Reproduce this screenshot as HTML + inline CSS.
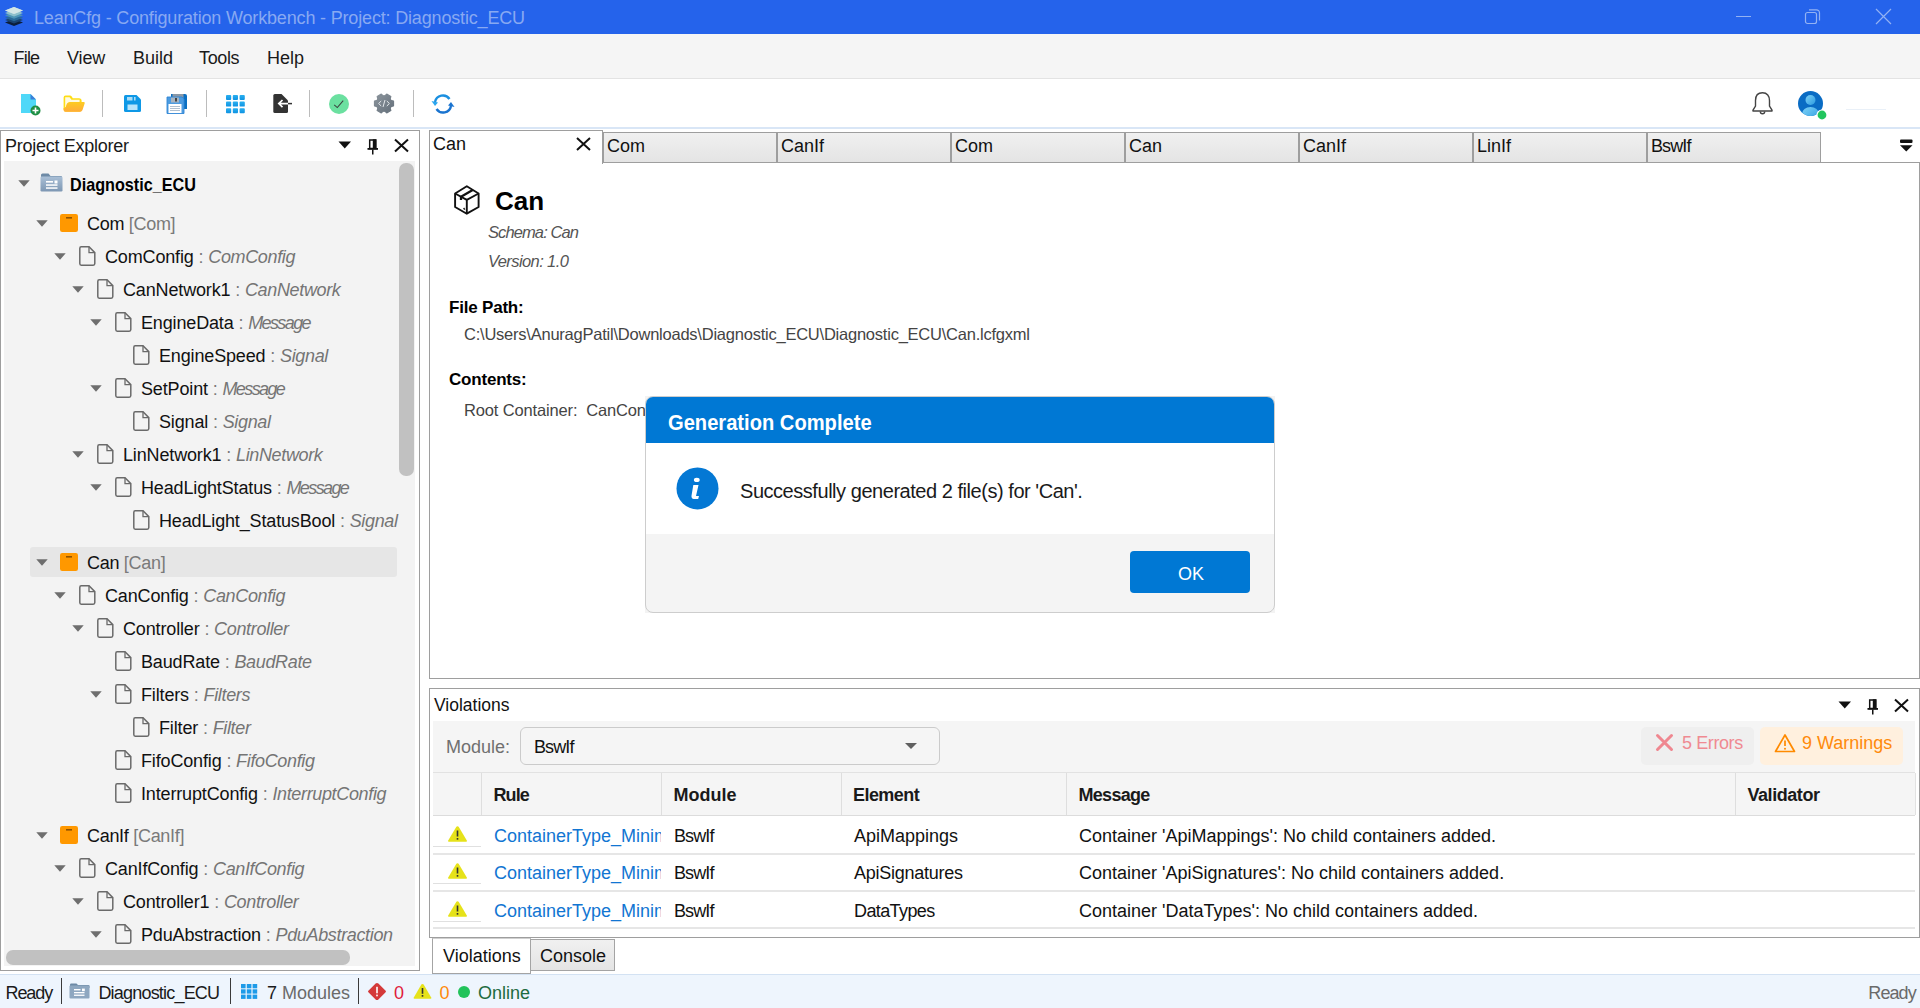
<!DOCTYPE html>
<html><head><meta charset="utf-8"><style>
html,body{margin:0;padding:0;width:1920px;height:1008px;overflow:hidden;background:#fff;font-family:"Liberation Sans",sans-serif;}
.t{position:absolute;white-space:nowrap;}
.r{position:absolute;}
svg.r{overflow:visible;}
</style></head><body>
<div class="r" style="left:0px;top:0px;width:1920px;height:34px;background:#2563eb"></div>
<svg class="r" style="left:0px;top:0px" width="30" height="34" viewBox="0 0 30 34"><path d="M14 19.0 L23 22.5 L14 26.0 L5 22.5 Z" fill="#0c1e3a"/><path d="M14 16.6 L23 20.1 L14 23.6 L5 20.1 Z" fill="#1a4470"/><path d="M14 14.2 L23 17.7 L14 21.2 L5 17.7 Z" fill="#2a6a98"/><path d="M14 11.8 L23 15.3 L14 18.8 L5 15.3 Z" fill="#4d95b5"/><path d="M14 9.4 L23 12.9 L14 16.4 L5 12.9 Z" fill="#8cc0cc"/><path d="M14 7.0 L23 10.5 L14 14.0 L5 10.5 Z" fill="#b5d5da"/><path d="M14 7.0 L23 10.5 L14 14.0 L5 10.5 Z" fill="#d3e6e6"/></svg>
<div class="t " style="left:34px;top:7.06px;font-size:18px;line-height:23px;color:#88a9f2;font-weight:400;font-style:normal;letter-spacing:-0.17px;">LeanCfg - Configuration Workbench - Project: Diagnostic_ECU</div>
<svg class="r" style="left:1736px;top:16px" width="16" height="2" viewBox="0 0 16 2"><rect x="0" y="0" width="15" height="1" fill="#93b2f3"/></svg>
<svg class="r" style="left:1804px;top:8px" width="18" height="18" viewBox="0 0 18 18"><rect x="1.5" y="4.5" width="11" height="11" rx="2" fill="none" stroke="#93b2f3" stroke-width="1.2"/><path d="M5 1.8 H12.5 a3 3 0 0 1 3 3 V12.5" fill="none" stroke="#93b2f3" stroke-width="1.2"/></svg>
<svg class="r" style="left:1875px;top:8px" width="17" height="17" viewBox="0 0 17 17"><path d="M1 1 L16 16 M16 1 L1 16" stroke="#93b2f3" stroke-width="1.2"/></svg>
<div class="r" style="left:0px;top:34px;width:1920px;height:45px;background:#f5f5f5"></div>
<div class="r" style="left:0px;top:78px;width:1920px;height:1px;background:#e3e3e3"></div>
<div class="t " style="left:13.5px;top:47.46px;font-size:18px;line-height:23px;color:#1a1a1a;font-weight:400;font-style:normal;letter-spacing:-0.8px;">File</div>
<div class="t " style="left:67px;top:47.46px;font-size:18px;line-height:23px;color:#1a1a1a;font-weight:400;font-style:normal;letter-spacing:-0.15px;">View</div>
<div class="t " style="left:133px;top:47.46px;font-size:18px;line-height:23px;color:#1a1a1a;font-weight:400;font-style:normal;letter-spacing:0px;">Build</div>
<div class="t " style="left:199px;top:47.46px;font-size:18px;line-height:23px;color:#1a1a1a;font-weight:400;font-style:normal;letter-spacing:-0.35px;">Tools</div>
<div class="t " style="left:267px;top:47.46px;font-size:18px;line-height:23px;color:#1a1a1a;font-weight:400;font-style:normal;letter-spacing:0px;">Help</div>
<div class="r" style="left:0px;top:79px;width:1920px;height:49px;background:#fff"></div>
<div class="r" style="left:0px;top:127px;width:1920px;height:2px;background:#d9e6f6"></div>
<div class="r" style="left:102px;top:90px;width:1px;height:27px;background:#bcbcbc"></div>
<div class="r" style="left:206px;top:90px;width:1px;height:27px;background:#bcbcbc"></div>
<div class="r" style="left:309px;top:90px;width:1px;height:27px;background:#bcbcbc"></div>
<div class="r" style="left:413px;top:90px;width:1px;height:27px;background:#bcbcbc"></div>
<svg class="r" style="left:20px;top:93px" width="20" height="22" viewBox="0 0 20 22">
<path d="M1 1 H10.5 L16 6.5 V20 H1 Z" fill="#4fd8f8"/>
<path d="M10.5 1 L16 6.5 H10.5 Z" fill="#3b7fd8"/>
<circle cx="15.5" cy="17.5" r="5" fill="#1e8f45"/>
<path d="M15.5 14.5 V20.5 M12.5 17.5 H18.5" stroke="#fff" stroke-width="1.6"/>
</svg>
<svg class="r" style="left:63px;top:95px" width="23" height="18" viewBox="0 0 23 18">
<defs><linearGradient id="fg" x1="0" y1="0" x2="0" y2="1"><stop offset="0" stop-color="#fdcc20"/><stop offset="1" stop-color="#ffab3a"/></linearGradient></defs>
<path d="M0.6 2.6 Q0.6 0.6 2.6 0.6 H7 Q8 0.6 8.7 1.6 L9.8 3.2 H16 Q18.6 3.2 18.6 5.8 V14.8 Q18.6 16.8 16.6 16.8 H2.6 Q0.6 16.8 0.6 14.8 Z" fill="#fedd16"/>
<path d="M2.2 2.3 H6.6 L8.4 4.8 H16.6 V12 H2.2 Z" fill="#fffbe0"/>
<path d="M2.6 13 Q3.4 6.9 6.6 6.9 H20.6 Q22.1 6.9 21.7 8.3 L19.5 15 Q18.9 16.8 17 16.8 H2.6 Q0.6 16.8 0.6 14.8 V13 Z" fill="url(#fg)"/>
</svg>
<svg class="r" style="left:123px;top:94px" width="19" height="19" viewBox="0 0 19 19">
<path d="M2.5 1 H13.5 L18 5.5 V16.5 Q18 18 16.5 18 H2.5 Q1 18 1 16.5 V2.5 Q1 1 2.5 1 Z" fill="#0e98e6"/>
<rect x="4" y="3" width="5.5" height="3.5" fill="#a9dcf7"/>
<rect x="11" y="3" width="1.6" height="3.5" fill="#a9dcf7"/>
<rect x="4.5" y="10.5" width="10" height="5.5" fill="#b7e4fb"/>
</svg>
<svg class="r" style="left:166px;top:93px" width="22" height="22" viewBox="0 0 22 22">
<path d="M5 1 H19 Q21 1 21 3 V16 H5 Z" fill="#0a6fc2"/>
<rect x="6.5" y="1" width="11" height="5" fill="#8a98a6"/>
<path d="M1 4 H16 L18 6 V20.5 H1 Z" fill="#4c9be0"/>
<rect x="5" y="4" width="8" height="5.5" fill="#a8b4c0"/>
<rect x="9" y="5" width="2" height="3.5" fill="#444"/>
<rect x="2.5" y="11" width="13" height="9.5" fill="#fff"/>
<path d="M4 13.5 H14 M4 15.5 H14 M4 17.5 H14" stroke="#9cb0c4" stroke-width="0.8"/>
<path d="M1 4 H16 L18 6 V20.5 H1 Z" fill="none" stroke="#2f86d6" stroke-width="0.9"/>
</svg>
<svg class="r" style="left:226px;top:94.5px" width="19" height="19" viewBox="0 0 19 19"><defs><linearGradient id="gr" x1="0" y1="0" x2="0" y2="1"><stop offset="0" stop-color="#2ab0f0"/><stop offset="1" stop-color="#0e92e2"/></linearGradient></defs><rect x="0.0" y="0.0" width="5.2" height="5" rx="0.9" fill="url(#gr)"/><rect x="6.8" y="0.0" width="5.2" height="5" rx="0.9" fill="url(#gr)"/><rect x="13.6" y="0.0" width="5.2" height="5" rx="0.9" fill="url(#gr)"/><rect x="0.0" y="6.6" width="5.2" height="5" rx="0.9" fill="url(#gr)"/><rect x="6.8" y="6.6" width="5.2" height="5" rx="0.9" fill="url(#gr)"/><rect x="13.6" y="6.6" width="5.2" height="5" rx="0.9" fill="url(#gr)"/><rect x="0.0" y="13.2" width="5.2" height="5" rx="0.9" fill="url(#gr)"/><rect x="6.8" y="13.2" width="5.2" height="5" rx="0.9" fill="url(#gr)"/><rect x="13.6" y="13.2" width="5.2" height="5" rx="0.9" fill="url(#gr)"/></svg>
<svg class="r" style="left:273px;top:94px" width="20" height="20" viewBox="0 0 20 20">
<path d="M1.8 0 H8.5 L15 6.5 V17.5 Q15 19 13.5 19 H1.8 Q0.3 19 0.3 17.5 V1.5 Q0.3 0 1.8 0 Z" fill="#333"/>
<path d="M15 9.6 H6 M9.5 6 L5.8 9.6 L9.5 13.2" fill="none" stroke="#fff" stroke-width="1.7"/>
<path d="M15 9.6 H19" stroke="#333" stroke-width="1.5"/>
</svg>
<svg class="r" style="left:329px;top:94px" width="20" height="20" viewBox="0 0 20 20">
<circle cx="10" cy="10" r="10" fill="#6be0a0"/>
<path d="M5.2 10.8 L8.3 13.6 L14.2 6.6" fill="none" stroke="#3c4440" stroke-width="1.05"/>
</svg>
<svg class="r" style="left:374px;top:94px" width="20" height="19" viewBox="0 0 20 19">
<defs><linearGradient id="gg" x1="0" y1="0" x2="1" y2="1"><stop offset="0" stop-color="#8a939b"/><stop offset="1" stop-color="#66717c"/></linearGradient></defs>
<path d="M16.94 6.41 L19.51 7.13 L19.51 11.87 L16.94 12.59 L16.15 13.97 L16.81 16.55 L12.70 18.92 L10.79 17.06 L9.21 17.06 L7.30 18.92 L3.19 16.55 L3.85 13.97 L3.06 12.59 L0.49 11.87 L0.49 7.13 L3.06 6.41 L3.85 5.03 L3.19 2.45 L7.30 0.08 L9.21 1.94 L10.79 1.94 L12.70 0.08 L16.81 2.45 L16.15 5.03 Z" fill="url(#gg)" stroke="url(#gg)" stroke-width="1.2" stroke-linejoin="round"/>
<circle cx="10" cy="9.5" r="8" fill="url(#gg)"/>
<path d="M7.2 7 L4.6 9.5 L7.2 12 M12.8 7 L15.4 9.5 L12.8 12 M11 6 L9 13" fill="none" stroke="#e4e8ec" stroke-width="1"/>
</svg>
<svg class="r" style="left:431px;top:93px" width="24" height="22" viewBox="0 0 24 22">
<path d="M4 9 A8 8 0 0 1 18.5 6" fill="none" stroke="#1a8fe0" stroke-width="2.4"/>
<path d="M20 13 A8 8 0 0 1 5.5 16" fill="none" stroke="#1a74d0" stroke-width="2.4"/>
<path d="M0.5 8 L7 9.5 L4 13 Z" fill="#2aa6ef"/>
<path d="M23.5 14 L17 12.5 L20 9 Z" fill="#1a74d0"/>
</svg>
<svg class="r" style="left:1751px;top:91px" width="23" height="25" viewBox="0 0 23 25">
<path d="M11.5 1.8 C6.8 1.8 4.5 5.2 4.5 9.5 V15 L2 19.2 Q1.6 20 2.5 20 H20.5 Q21.4 20 21 19.2 L18.5 15 V9.5 C18.5 5.2 16.2 1.8 11.5 1.8 Z" fill="none" stroke="#444" stroke-width="1.4"/>
<path d="M9.3 20.5 Q9.3 22.8 11.5 22.8 Q13.7 22.8 13.7 20.5" fill="none" stroke="#444" stroke-width="1.4"/>
</svg>
<svg class="r" style="left:1797px;top:90px" width="31" height="31" viewBox="0 0 31 31">
<defs><linearGradient id="av" x1="0" y1="0" x2="1" y2="1"><stop offset="0" stop-color="#7fd2f7"/><stop offset="1" stop-color="#2b9be0"/></linearGradient>
<clipPath id="avc"><circle cx="13.5" cy="13.5" r="12.5"/></clipPath></defs>
<circle cx="13.5" cy="13.5" r="12.5" fill="#0a6cc4"/>
<g clip-path="url(#avc)"><circle cx="13.5" cy="10" r="5" fill="url(#av)"/><ellipse cx="13.5" cy="24" rx="8.5" ry="7" fill="url(#av)"/></g>
<circle cx="25" cy="25" r="5.5" fill="#fff"/>
<circle cx="25" cy="25" r="4.4" fill="#22c55e"/>
</svg>
<div class="r" style="left:0px;top:129px;width:1920px;height:845px;background:#fff"></div>
<div class="r" style="left:1846px;top:109px;width:40px;height:1px;background:#e9f0f8"></div>
<div class="r" style="left:0px;top:130px;width:420px;height:841px;box-sizing:border-box;border:1px solid #9e9e9e;background:#fff"></div>
<div class="t " style="left:5px;top:135.36px;font-size:18px;line-height:23px;color:#1a1a1a;font-weight:400;font-style:normal;letter-spacing:-0.27px;">Project Explorer</div>
<svg class="r" style="left:338px;top:141px" width="14" height="8" viewBox="0 0 14 8"><path d="M0.5 0.5 H13 L6.75 7.5 Z" fill="#111"/></svg>
<svg class="r" style="left:366px;top:138px" width="12" height="17" viewBox="0 0 12 17"><path d="M3.7 2 H9.7 V10.5 H3.7 Z" fill="none" stroke="#111" stroke-width="1.5"/><rect x="6.8" y="1.3" width="3.6" height="9.5" fill="#111"/><rect x="1.5" y="10" width="10.5" height="1.8" fill="#111"/><rect x="6" y="11.5" width="1.5" height="5" fill="#111"/></svg>
<svg class="r" style="left:394px;top:139px" width="15" height="13" viewBox="0 0 15 13"><path d="M1 0.5 L14 12.5 M14 0.5 L1 12.5" stroke="#111" stroke-width="2"/></svg>
<div class="r" style="left:4px;top:161px;width:411px;height:805px;background:#f3f3f3"></div>
<div class="r" style="left:399px;top:163px;width:15px;height:313px;background:#c1c1c1;border-radius:7px"></div>
<div class="r" style="left:6px;top:950px;width:344px;height:15px;background:#c1c1c1;border-radius:7px"></div>
<div class="r" style="left:30px;top:547px;width:367px;height:30px;background:#e6e6e6;border-radius:3px"></div>
<svg class="r" style="left:18px;top:179.8px" width="12" height="7" viewBox="0 0 12 7"><path d="M0.3 0.3 H11.7 L6 6.7 Z" fill="#6e6e6e"/></svg>
<svg class="r" style="left:40px;top:173.3px" width="23" height="19" viewBox="0 0 23 19"><defs><linearGradient id="pj" x1="0" y1="0" x2="0" y2="1"><stop offset="0" stop-color="#a9bfd6"/><stop offset="1" stop-color="#7d97b3"/></linearGradient></defs>
<path d="M1 2 Q1 0.5 2.5 0.5 H8.5 L10.5 3 H21 Q22 3 22 4 V6 H1 Z" fill="#6d8aa6"/>
<rect x="0.5" y="3.5" width="22" height="15" rx="1.2" fill="url(#pj)"/>
<rect x="6" y="8" width="7" height="1.6" fill="#fff"/><rect x="14.5" y="7.5" width="3" height="3" fill="#fff"/>
<rect x="6" y="11.3" width="11.5" height="1.5" fill="#fff"/><rect x="6" y="14.3" width="11.5" height="1.5" fill="#fff"/></svg>
<div class="t " style="left:70px;top:172.89px;font-size:18.5px;line-height:24px;color:#000;font-weight:700;font-style:normal;transform:scaleX(0.875);transform-origin:0 0;">Diagnostic_ECU</div>
<svg class="r" style="left:36px;top:219.5px" width="12" height="7" viewBox="0 0 12 7"><path d="M0.3 0.3 H11.7 L6 6.7 Z" fill="#6e6e6e"/></svg>
<svg class="r" style="left:60px;top:214px" width="18" height="18" viewBox="0 0 18 18"><rect x="0" y="0" width="18" height="18" rx="2.2" fill="#ff9800"/><rect x="6" y="3" width="6" height="1.6" fill="#6b3b00" opacity="0.75"/></svg>
<div class="t " style="left:87px;top:213.26px;font-size:18px;line-height:23px;color:#111;font-weight:400;font-style:normal;letter-spacing:-0.3px">Com <span style="color:#7a7a7a">[Com]</span></div>
<svg class="r" style="left:54px;top:252.5px" width="12" height="7" viewBox="0 0 12 7"><path d="M0.3 0.3 H11.7 L6 6.7 Z" fill="#6e6e6e"/></svg>
<svg class="r" style="left:79px;top:246px" width="17" height="20" viewBox="0 0 17 20"><path d="M2.2 0.8 H10 L15.8 6.6 V17.6 Q15.8 19.2 14.2 19.2 H2.2 Q0.8 19.2 0.8 17.6 V2.4 Q0.8 0.8 2.2 0.8 Z" fill="none" stroke="#6a6a6a" stroke-width="1.5"/><path d="M10 0.8 V6.6 H15.8" fill="none" stroke="#6a6a6a" stroke-width="1.3"/></svg>
<div class="t " style="left:105px;top:246.26px;font-size:18px;line-height:23px;color:#111;font-weight:400;font-style:normal;letter-spacing:-0.15px">ComConfig <span style="color:#7a7a7a">:</span> <span style="color:#757575;font-style:italic;letter-spacing:-0.35px">ComConfig</span></div>
<svg class="r" style="left:72px;top:285.5px" width="12" height="7" viewBox="0 0 12 7"><path d="M0.3 0.3 H11.7 L6 6.7 Z" fill="#6e6e6e"/></svg>
<svg class="r" style="left:97px;top:279px" width="17" height="20" viewBox="0 0 17 20"><path d="M2.2 0.8 H10 L15.8 6.6 V17.6 Q15.8 19.2 14.2 19.2 H2.2 Q0.8 19.2 0.8 17.6 V2.4 Q0.8 0.8 2.2 0.8 Z" fill="none" stroke="#6a6a6a" stroke-width="1.5"/><path d="M10 0.8 V6.6 H15.8" fill="none" stroke="#6a6a6a" stroke-width="1.3"/></svg>
<div class="t " style="left:123px;top:279.26px;font-size:18px;line-height:23px;color:#111;font-weight:400;font-style:normal;letter-spacing:-0.15px">CanNetwork1 <span style="color:#7a7a7a">:</span> <span style="color:#757575;font-style:italic;letter-spacing:-0.35px">CanNetwork</span></div>
<svg class="r" style="left:90px;top:318.5px" width="12" height="7" viewBox="0 0 12 7"><path d="M0.3 0.3 H11.7 L6 6.7 Z" fill="#6e6e6e"/></svg>
<svg class="r" style="left:115px;top:312px" width="17" height="20" viewBox="0 0 17 20"><path d="M2.2 0.8 H10 L15.8 6.6 V17.6 Q15.8 19.2 14.2 19.2 H2.2 Q0.8 19.2 0.8 17.6 V2.4 Q0.8 0.8 2.2 0.8 Z" fill="none" stroke="#6a6a6a" stroke-width="1.5"/><path d="M10 0.8 V6.6 H15.8" fill="none" stroke="#6a6a6a" stroke-width="1.3"/></svg>
<div class="t " style="left:141px;top:312.26px;font-size:18px;line-height:23px;color:#111;font-weight:400;font-style:normal;letter-spacing:-0.15px">EngineData <span style="color:#7a7a7a">:</span> <span style="color:#757575;font-style:italic;letter-spacing:-1.6px">Message</span></div>
<svg class="r" style="left:133px;top:345px" width="17" height="20" viewBox="0 0 17 20"><path d="M2.2 0.8 H10 L15.8 6.6 V17.6 Q15.8 19.2 14.2 19.2 H2.2 Q0.8 19.2 0.8 17.6 V2.4 Q0.8 0.8 2.2 0.8 Z" fill="none" stroke="#6a6a6a" stroke-width="1.5"/><path d="M10 0.8 V6.6 H15.8" fill="none" stroke="#6a6a6a" stroke-width="1.3"/></svg>
<div class="t " style="left:159px;top:345.26px;font-size:18px;line-height:23px;color:#111;font-weight:400;font-style:normal;letter-spacing:-0.15px">EngineSpeed <span style="color:#7a7a7a">:</span> <span style="color:#757575;font-style:italic;letter-spacing:-0.35px">Signal</span></div>
<svg class="r" style="left:90px;top:384.5px" width="12" height="7" viewBox="0 0 12 7"><path d="M0.3 0.3 H11.7 L6 6.7 Z" fill="#6e6e6e"/></svg>
<svg class="r" style="left:115px;top:378px" width="17" height="20" viewBox="0 0 17 20"><path d="M2.2 0.8 H10 L15.8 6.6 V17.6 Q15.8 19.2 14.2 19.2 H2.2 Q0.8 19.2 0.8 17.6 V2.4 Q0.8 0.8 2.2 0.8 Z" fill="none" stroke="#6a6a6a" stroke-width="1.5"/><path d="M10 0.8 V6.6 H15.8" fill="none" stroke="#6a6a6a" stroke-width="1.3"/></svg>
<div class="t " style="left:141px;top:378.26px;font-size:18px;line-height:23px;color:#111;font-weight:400;font-style:normal;letter-spacing:-0.15px">SetPoint <span style="color:#7a7a7a">:</span> <span style="color:#757575;font-style:italic;letter-spacing:-1.6px">Message</span></div>
<svg class="r" style="left:133px;top:411px" width="17" height="20" viewBox="0 0 17 20"><path d="M2.2 0.8 H10 L15.8 6.6 V17.6 Q15.8 19.2 14.2 19.2 H2.2 Q0.8 19.2 0.8 17.6 V2.4 Q0.8 0.8 2.2 0.8 Z" fill="none" stroke="#6a6a6a" stroke-width="1.5"/><path d="M10 0.8 V6.6 H15.8" fill="none" stroke="#6a6a6a" stroke-width="1.3"/></svg>
<div class="t " style="left:159px;top:411.26px;font-size:18px;line-height:23px;color:#111;font-weight:400;font-style:normal;letter-spacing:-0.15px">Signal <span style="color:#7a7a7a">:</span> <span style="color:#757575;font-style:italic;letter-spacing:-0.35px">Signal</span></div>
<svg class="r" style="left:72px;top:450.5px" width="12" height="7" viewBox="0 0 12 7"><path d="M0.3 0.3 H11.7 L6 6.7 Z" fill="#6e6e6e"/></svg>
<svg class="r" style="left:97px;top:444px" width="17" height="20" viewBox="0 0 17 20"><path d="M2.2 0.8 H10 L15.8 6.6 V17.6 Q15.8 19.2 14.2 19.2 H2.2 Q0.8 19.2 0.8 17.6 V2.4 Q0.8 0.8 2.2 0.8 Z" fill="none" stroke="#6a6a6a" stroke-width="1.5"/><path d="M10 0.8 V6.6 H15.8" fill="none" stroke="#6a6a6a" stroke-width="1.3"/></svg>
<div class="t " style="left:123px;top:444.26px;font-size:18px;line-height:23px;color:#111;font-weight:400;font-style:normal;letter-spacing:-0.15px">LinNetwork1 <span style="color:#7a7a7a">:</span> <span style="color:#757575;font-style:italic;letter-spacing:-0.35px">LinNetwork</span></div>
<svg class="r" style="left:90px;top:483.5px" width="12" height="7" viewBox="0 0 12 7"><path d="M0.3 0.3 H11.7 L6 6.7 Z" fill="#6e6e6e"/></svg>
<svg class="r" style="left:115px;top:477px" width="17" height="20" viewBox="0 0 17 20"><path d="M2.2 0.8 H10 L15.8 6.6 V17.6 Q15.8 19.2 14.2 19.2 H2.2 Q0.8 19.2 0.8 17.6 V2.4 Q0.8 0.8 2.2 0.8 Z" fill="none" stroke="#6a6a6a" stroke-width="1.5"/><path d="M10 0.8 V6.6 H15.8" fill="none" stroke="#6a6a6a" stroke-width="1.3"/></svg>
<div class="t " style="left:141px;top:477.26px;font-size:18px;line-height:23px;color:#111;font-weight:400;font-style:normal;letter-spacing:-0.15px">HeadLightStatus <span style="color:#7a7a7a">:</span> <span style="color:#757575;font-style:italic;letter-spacing:-1.6px">Message</span></div>
<svg class="r" style="left:133px;top:510px" width="17" height="20" viewBox="0 0 17 20"><path d="M2.2 0.8 H10 L15.8 6.6 V17.6 Q15.8 19.2 14.2 19.2 H2.2 Q0.8 19.2 0.8 17.6 V2.4 Q0.8 0.8 2.2 0.8 Z" fill="none" stroke="#6a6a6a" stroke-width="1.5"/><path d="M10 0.8 V6.6 H15.8" fill="none" stroke="#6a6a6a" stroke-width="1.3"/></svg>
<div class="t " style="left:159px;top:510.26px;font-size:18px;line-height:23px;color:#111;font-weight:400;font-style:normal;letter-spacing:-0.15px">HeadLight_StatusBool <span style="color:#7a7a7a">:</span> <span style="color:#757575;font-style:italic;letter-spacing:-0.35px">Signal</span></div>
<svg class="r" style="left:36px;top:558.5px" width="12" height="7" viewBox="0 0 12 7"><path d="M0.3 0.3 H11.7 L6 6.7 Z" fill="#6e6e6e"/></svg>
<svg class="r" style="left:60px;top:553px" width="18" height="18" viewBox="0 0 18 18"><rect x="0" y="0" width="18" height="18" rx="2.2" fill="#ff9800"/><rect x="6" y="3" width="6" height="1.6" fill="#6b3b00" opacity="0.75"/></svg>
<div class="t " style="left:87px;top:552.26px;font-size:18px;line-height:23px;color:#111;font-weight:400;font-style:normal;letter-spacing:-0.3px">Can <span style="color:#7a7a7a">[Can]</span></div>
<svg class="r" style="left:54px;top:591.5px" width="12" height="7" viewBox="0 0 12 7"><path d="M0.3 0.3 H11.7 L6 6.7 Z" fill="#6e6e6e"/></svg>
<svg class="r" style="left:79px;top:585px" width="17" height="20" viewBox="0 0 17 20"><path d="M2.2 0.8 H10 L15.8 6.6 V17.6 Q15.8 19.2 14.2 19.2 H2.2 Q0.8 19.2 0.8 17.6 V2.4 Q0.8 0.8 2.2 0.8 Z" fill="none" stroke="#6a6a6a" stroke-width="1.5"/><path d="M10 0.8 V6.6 H15.8" fill="none" stroke="#6a6a6a" stroke-width="1.3"/></svg>
<div class="t " style="left:105px;top:585.26px;font-size:18px;line-height:23px;color:#111;font-weight:400;font-style:normal;letter-spacing:-0.15px">CanConfig <span style="color:#7a7a7a">:</span> <span style="color:#757575;font-style:italic;letter-spacing:-0.35px">CanConfig</span></div>
<svg class="r" style="left:72px;top:624.5px" width="12" height="7" viewBox="0 0 12 7"><path d="M0.3 0.3 H11.7 L6 6.7 Z" fill="#6e6e6e"/></svg>
<svg class="r" style="left:97px;top:618px" width="17" height="20" viewBox="0 0 17 20"><path d="M2.2 0.8 H10 L15.8 6.6 V17.6 Q15.8 19.2 14.2 19.2 H2.2 Q0.8 19.2 0.8 17.6 V2.4 Q0.8 0.8 2.2 0.8 Z" fill="none" stroke="#6a6a6a" stroke-width="1.5"/><path d="M10 0.8 V6.6 H15.8" fill="none" stroke="#6a6a6a" stroke-width="1.3"/></svg>
<div class="t " style="left:123px;top:618.26px;font-size:18px;line-height:23px;color:#111;font-weight:400;font-style:normal;letter-spacing:-0.15px">Controller <span style="color:#7a7a7a">:</span> <span style="color:#757575;font-style:italic;letter-spacing:-0.35px">Controller</span></div>
<svg class="r" style="left:115px;top:651px" width="17" height="20" viewBox="0 0 17 20"><path d="M2.2 0.8 H10 L15.8 6.6 V17.6 Q15.8 19.2 14.2 19.2 H2.2 Q0.8 19.2 0.8 17.6 V2.4 Q0.8 0.8 2.2 0.8 Z" fill="none" stroke="#6a6a6a" stroke-width="1.5"/><path d="M10 0.8 V6.6 H15.8" fill="none" stroke="#6a6a6a" stroke-width="1.3"/></svg>
<div class="t " style="left:141px;top:651.26px;font-size:18px;line-height:23px;color:#111;font-weight:400;font-style:normal;letter-spacing:-0.15px">BaudRate <span style="color:#7a7a7a">:</span> <span style="color:#757575;font-style:italic;letter-spacing:-0.35px">BaudRate</span></div>
<svg class="r" style="left:90px;top:690.5px" width="12" height="7" viewBox="0 0 12 7"><path d="M0.3 0.3 H11.7 L6 6.7 Z" fill="#6e6e6e"/></svg>
<svg class="r" style="left:115px;top:684px" width="17" height="20" viewBox="0 0 17 20"><path d="M2.2 0.8 H10 L15.8 6.6 V17.6 Q15.8 19.2 14.2 19.2 H2.2 Q0.8 19.2 0.8 17.6 V2.4 Q0.8 0.8 2.2 0.8 Z" fill="none" stroke="#6a6a6a" stroke-width="1.5"/><path d="M10 0.8 V6.6 H15.8" fill="none" stroke="#6a6a6a" stroke-width="1.3"/></svg>
<div class="t " style="left:141px;top:684.26px;font-size:18px;line-height:23px;color:#111;font-weight:400;font-style:normal;letter-spacing:-0.15px">Filters <span style="color:#7a7a7a">:</span> <span style="color:#757575;font-style:italic;letter-spacing:-0.35px">Filters</span></div>
<svg class="r" style="left:133px;top:717px" width="17" height="20" viewBox="0 0 17 20"><path d="M2.2 0.8 H10 L15.8 6.6 V17.6 Q15.8 19.2 14.2 19.2 H2.2 Q0.8 19.2 0.8 17.6 V2.4 Q0.8 0.8 2.2 0.8 Z" fill="none" stroke="#6a6a6a" stroke-width="1.5"/><path d="M10 0.8 V6.6 H15.8" fill="none" stroke="#6a6a6a" stroke-width="1.3"/></svg>
<div class="t " style="left:159px;top:717.26px;font-size:18px;line-height:23px;color:#111;font-weight:400;font-style:normal;letter-spacing:-0.15px">Filter <span style="color:#7a7a7a">:</span> <span style="color:#757575;font-style:italic;letter-spacing:-0.35px">Filter</span></div>
<svg class="r" style="left:115px;top:750px" width="17" height="20" viewBox="0 0 17 20"><path d="M2.2 0.8 H10 L15.8 6.6 V17.6 Q15.8 19.2 14.2 19.2 H2.2 Q0.8 19.2 0.8 17.6 V2.4 Q0.8 0.8 2.2 0.8 Z" fill="none" stroke="#6a6a6a" stroke-width="1.5"/><path d="M10 0.8 V6.6 H15.8" fill="none" stroke="#6a6a6a" stroke-width="1.3"/></svg>
<div class="t " style="left:141px;top:750.26px;font-size:18px;line-height:23px;color:#111;font-weight:400;font-style:normal;letter-spacing:-0.15px">FifoConfig <span style="color:#7a7a7a">:</span> <span style="color:#757575;font-style:italic;letter-spacing:-0.35px">FifoConfig</span></div>
<svg class="r" style="left:115px;top:783px" width="17" height="20" viewBox="0 0 17 20"><path d="M2.2 0.8 H10 L15.8 6.6 V17.6 Q15.8 19.2 14.2 19.2 H2.2 Q0.8 19.2 0.8 17.6 V2.4 Q0.8 0.8 2.2 0.8 Z" fill="none" stroke="#6a6a6a" stroke-width="1.5"/><path d="M10 0.8 V6.6 H15.8" fill="none" stroke="#6a6a6a" stroke-width="1.3"/></svg>
<div class="t " style="left:141px;top:783.26px;font-size:18px;line-height:23px;color:#111;font-weight:400;font-style:normal;letter-spacing:-0.15px">InterruptConfig <span style="color:#7a7a7a">:</span> <span style="color:#757575;font-style:italic;letter-spacing:-0.35px">InterruptConfig</span></div>
<svg class="r" style="left:36px;top:831.5px" width="12" height="7" viewBox="0 0 12 7"><path d="M0.3 0.3 H11.7 L6 6.7 Z" fill="#6e6e6e"/></svg>
<svg class="r" style="left:60px;top:826px" width="18" height="18" viewBox="0 0 18 18"><rect x="0" y="0" width="18" height="18" rx="2.2" fill="#ff9800"/><rect x="6" y="3" width="6" height="1.6" fill="#6b3b00" opacity="0.75"/></svg>
<div class="t " style="left:87px;top:825.26px;font-size:18px;line-height:23px;color:#111;font-weight:400;font-style:normal;letter-spacing:-0.3px">CanIf <span style="color:#7a7a7a">[CanIf]</span></div>
<svg class="r" style="left:54px;top:864.5px" width="12" height="7" viewBox="0 0 12 7"><path d="M0.3 0.3 H11.7 L6 6.7 Z" fill="#6e6e6e"/></svg>
<svg class="r" style="left:79px;top:858px" width="17" height="20" viewBox="0 0 17 20"><path d="M2.2 0.8 H10 L15.8 6.6 V17.6 Q15.8 19.2 14.2 19.2 H2.2 Q0.8 19.2 0.8 17.6 V2.4 Q0.8 0.8 2.2 0.8 Z" fill="none" stroke="#6a6a6a" stroke-width="1.5"/><path d="M10 0.8 V6.6 H15.8" fill="none" stroke="#6a6a6a" stroke-width="1.3"/></svg>
<div class="t " style="left:105px;top:858.26px;font-size:18px;line-height:23px;color:#111;font-weight:400;font-style:normal;letter-spacing:-0.15px">CanIfConfig <span style="color:#7a7a7a">:</span> <span style="color:#757575;font-style:italic;letter-spacing:-0.35px">CanIfConfig</span></div>
<svg class="r" style="left:72px;top:897.5px" width="12" height="7" viewBox="0 0 12 7"><path d="M0.3 0.3 H11.7 L6 6.7 Z" fill="#6e6e6e"/></svg>
<svg class="r" style="left:97px;top:891px" width="17" height="20" viewBox="0 0 17 20"><path d="M2.2 0.8 H10 L15.8 6.6 V17.6 Q15.8 19.2 14.2 19.2 H2.2 Q0.8 19.2 0.8 17.6 V2.4 Q0.8 0.8 2.2 0.8 Z" fill="none" stroke="#6a6a6a" stroke-width="1.5"/><path d="M10 0.8 V6.6 H15.8" fill="none" stroke="#6a6a6a" stroke-width="1.3"/></svg>
<div class="t " style="left:123px;top:891.26px;font-size:18px;line-height:23px;color:#111;font-weight:400;font-style:normal;letter-spacing:-0.15px">Controller1 <span style="color:#7a7a7a">:</span> <span style="color:#757575;font-style:italic;letter-spacing:-0.35px">Controller</span></div>
<svg class="r" style="left:90px;top:930.5px" width="12" height="7" viewBox="0 0 12 7"><path d="M0.3 0.3 H11.7 L6 6.7 Z" fill="#6e6e6e"/></svg>
<svg class="r" style="left:115px;top:924px" width="17" height="20" viewBox="0 0 17 20"><path d="M2.2 0.8 H10 L15.8 6.6 V17.6 Q15.8 19.2 14.2 19.2 H2.2 Q0.8 19.2 0.8 17.6 V2.4 Q0.8 0.8 2.2 0.8 Z" fill="none" stroke="#6a6a6a" stroke-width="1.5"/><path d="M10 0.8 V6.6 H15.8" fill="none" stroke="#6a6a6a" stroke-width="1.3"/></svg>
<div class="t " style="left:141px;top:924.26px;font-size:18px;line-height:23px;color:#111;font-weight:400;font-style:normal;letter-spacing:-0.15px">PduAbstraction <span style="color:#7a7a7a">:</span> <span style="color:#757575;font-style:italic;letter-spacing:-0.35px">PduAbstraction</span></div>
<div class="r" style="left:429px;top:162px;width:1491px;height:517px;box-sizing:border-box;border:1px solid #9e9e9e;background:#fff"></div>
<div class="r" style="left:603px;top:132px;width:174px;height:31px;box-sizing:border-box;border:1px solid #9e9e9e;background:linear-gradient(#f0f0f0,#e4e4e4)"></div>
<div class="t " style="left:607px;top:135.26px;font-size:18px;line-height:23px;color:#111;font-weight:400;font-style:normal;letter-spacing:0px;">Com</div>
<div class="r" style="left:777px;top:132px;width:174px;height:31px;box-sizing:border-box;border:1px solid #9e9e9e;background:linear-gradient(#f0f0f0,#e4e4e4)"></div>
<div class="t " style="left:781px;top:135.26px;font-size:18px;line-height:23px;color:#111;font-weight:400;font-style:normal;letter-spacing:0px;">CanIf</div>
<div class="r" style="left:951px;top:132px;width:174px;height:31px;box-sizing:border-box;border:1px solid #9e9e9e;background:linear-gradient(#f0f0f0,#e4e4e4)"></div>
<div class="t " style="left:955px;top:135.26px;font-size:18px;line-height:23px;color:#111;font-weight:400;font-style:normal;letter-spacing:0px;">Com</div>
<div class="r" style="left:1125px;top:132px;width:174px;height:31px;box-sizing:border-box;border:1px solid #9e9e9e;background:linear-gradient(#f0f0f0,#e4e4e4)"></div>
<div class="t " style="left:1129px;top:135.26px;font-size:18px;line-height:23px;color:#111;font-weight:400;font-style:normal;letter-spacing:0px;">Can</div>
<div class="r" style="left:1299px;top:132px;width:174px;height:31px;box-sizing:border-box;border:1px solid #9e9e9e;background:linear-gradient(#f0f0f0,#e4e4e4)"></div>
<div class="t " style="left:1303px;top:135.26px;font-size:18px;line-height:23px;color:#111;font-weight:400;font-style:normal;letter-spacing:0px;">CanIf</div>
<div class="r" style="left:1473px;top:132px;width:174px;height:31px;box-sizing:border-box;border:1px solid #9e9e9e;background:linear-gradient(#f0f0f0,#e4e4e4)"></div>
<div class="t " style="left:1477px;top:135.26px;font-size:18px;line-height:23px;color:#111;font-weight:400;font-style:normal;letter-spacing:0px;">LinIf</div>
<div class="r" style="left:1647px;top:132px;width:174px;height:31px;box-sizing:border-box;border:1px solid #9e9e9e;background:linear-gradient(#f0f0f0,#e4e4e4)"></div>
<div class="t " style="left:1651px;top:135.26px;font-size:18px;line-height:23px;color:#111;font-weight:400;font-style:normal;letter-spacing:-0.9px;">BswIf</div>
<div class="r" style="left:429px;top:130px;width:174px;height:34px;box-sizing:border-box;border:1px solid #9e9e9e;border-bottom:none;background:#fff"></div>
<div class="t " style="left:433px;top:133.26px;font-size:18px;line-height:23px;color:#111;font-weight:400;font-style:normal;">Can</div>
<svg class="r" style="left:576px;top:137px" width="15" height="14" viewBox="0 0 15 14"><path d="M1 1 L14 13 M14 1 L1 13" stroke="#111" stroke-width="2"/></svg>
<svg class="r" style="left:1900px;top:139px" width="13" height="13" viewBox="0 0 13 13"><rect x="0" y="0.5" width="12.5" height="3.4" rx="1" fill="#111"/><path d="M0 6.3 H12.5 L6.25 12.5 Z" fill="#111"/></svg>
<svg class="r" style="left:453px;top:185px" width="28" height="31" viewBox="0 0 28 31"><g fill="none" stroke="#111" stroke-width="1.9" stroke-linejoin="round">
<path d="M13.8 1.3 L25.6 8.5 V22 L13.8 28.7 L2.1 22 V8.5 Z"/><path d="M2.1 8.5 L13.8 14.8 L25.6 8.5 M13.8 14.8 V28.7"/>
<path d="M19.7 4.9 L8 11.7 V15" stroke-width="2.3"/><path d="M10.6 23 L11.8 24.6" stroke-width="1.4"/></g></svg>
<div class="t " style="left:495px;top:183.89px;font-size:26px;line-height:34px;color:#000;font-weight:700;font-style:normal;">Can</div>
<div class="t " style="left:488px;top:221.98px;font-size:16.5px;line-height:21px;color:#555;font-weight:400;font-style:italic;letter-spacing:-0.9px;">Schema: Can</div>
<div class="t " style="left:488px;top:250.68px;font-size:16.5px;line-height:21px;color:#555;font-weight:400;font-style:italic;letter-spacing:-0.6px;">Version: 1.0</div>
<div class="t " style="left:449px;top:296.71px;font-size:17px;line-height:22px;color:#000;font-weight:700;font-style:normal;letter-spacing:-0.2px;">File Path:</div>
<div class="t " style="left:464px;top:324.28px;font-size:16.5px;line-height:21px;color:#444;font-weight:400;font-style:normal;letter-spacing:-0.23px;">C:\Users\AnuragPatil\Downloads\Diagnostic_ECU\Diagnostic_ECU\Can.lcfgxml</div>
<div class="t " style="left:449px;top:368.91px;font-size:17px;line-height:22px;color:#000;font-weight:700;font-style:normal;letter-spacing:-0.2px;">Contents:</div>
<div class="t " style="left:464px;top:400.08px;font-size:16.5px;line-height:21px;color:#444;font-weight:400;font-style:normal;letter-spacing:-0.15px;">Root Container:&nbsp; CanConfig</div>
<div class="r" style="left:429px;top:688px;width:1491px;height:250px;box-sizing:border-box;border:1px solid #9e9e9e;background:#fff"></div>
<div class="t " style="left:434px;top:694.24px;font-size:17.5px;line-height:23px;color:#111;font-weight:400;font-style:normal;">Violations</div>
<svg class="r" style="left:1838px;top:701px" width="14" height="8" viewBox="0 0 14 8"><path d="M0.5 0.5 H13 L6.75 7.5 Z" fill="#111"/></svg>
<svg class="r" style="left:1866px;top:698px" width="12" height="17" viewBox="0 0 12 17"><path d="M3.7 2 H9.7 V10.5 H3.7 Z" fill="none" stroke="#111" stroke-width="1.5"/><rect x="6.8" y="1.3" width="3.6" height="9.5" fill="#111"/><rect x="1.5" y="10" width="10.5" height="1.8" fill="#111"/><rect x="6" y="11.5" width="1.5" height="5" fill="#111"/></svg>
<svg class="r" style="left:1894px;top:699px" width="15" height="13" viewBox="0 0 15 13"><path d="M1 0.5 L14 12.5 M14 0.5 L1 12.5" stroke="#111" stroke-width="2"/></svg>
<div class="r" style="left:433px;top:721px;width:1482px;height:51px;background:#f5f5f5"></div>
<div class="t " style="left:446px;top:736.16px;font-size:18px;line-height:23px;color:#707070;font-weight:400;font-style:normal;">Module:</div>
<div class="r" style="left:520px;top:727px;width:420px;height:38px;box-sizing:border-box;border:1px solid #cbcbcb;border-radius:6px;background:#f5f5f5"></div>
<div class="t " style="left:534px;top:735.76px;font-size:18px;line-height:23px;color:#111;font-weight:400;font-style:normal;letter-spacing:-0.9px;">BswIf</div>
<svg class="r" style="left:905px;top:743px" width="12" height="7" viewBox="0 0 12 7"><path d="M0 0 H12 L6 6 Z" fill="#606060"/></svg>
<div class="r" style="left:1641px;top:727px;width:113px;height:38px;background:#efefef;border-radius:5px"></div>
<svg class="r" style="left:1655px;top:733px" width="19" height="19" viewBox="0 0 19 19"><path d="M2.5 2.5 L16.5 16.5 M16.5 2.5 L2.5 16.5" stroke="#ef8790" stroke-width="3" stroke-linecap="round"/></svg>
<div class="t " style="left:1682px;top:732.01px;font-size:18px;line-height:23px;color:#ef8a92;font-weight:400;font-style:normal;letter-spacing:-0.4px;">5 Errors</div>
<div class="r" style="left:1760px;top:727px;width:143px;height:38px;background:#fff0de;border-radius:5px"></div>
<svg class="r" style="left:1774px;top:733px" width="22" height="20" viewBox="0 0 22 20"><path d="M11 2 L20.5 18.5 H1.5 Z" fill="none" stroke="#ff8a00" stroke-width="1.7" stroke-linejoin="round"/><path d="M11 7.5 V13" stroke="#ff8a00" stroke-width="1.7"/><circle cx="11" cy="15.7" r="1" fill="#ff8a00"/></svg>
<div class="t " style="left:1802px;top:732.01px;font-size:18px;line-height:23px;color:#ff8a0a;font-weight:400;font-style:normal;">9 Warnings</div>
<div class="r" style="left:433px;top:772px;width:1482px;height:43px;background:#f5f5f5"></div>
<div class="r" style="left:433px;top:772px;width:1482px;height:1px;background:#e2e2e2"></div>
<div class="r" style="left:433px;top:815px;width:1482px;height:1px;background:#dcdcdc"></div>
<div class="r" style="left:481px;top:773px;width:1px;height:42px;background:#dedede"></div>
<div class="r" style="left:661px;top:773px;width:1px;height:42px;background:#dedede"></div>
<div class="r" style="left:841px;top:773px;width:1px;height:42px;background:#dedede"></div>
<div class="r" style="left:1066px;top:773px;width:1px;height:42px;background:#dedede"></div>
<div class="r" style="left:1735px;top:773px;width:1px;height:42px;background:#dedede"></div>
<div class="r" style="left:1915px;top:773px;width:1px;height:42px;background:#e2e2e2"></div>
<div class="t " style="left:493.5px;top:784.26px;font-size:18px;line-height:23px;color:#1a1a1a;font-weight:700;font-style:normal;letter-spacing:-0.9px;">Rule</div>
<div class="t " style="left:673.5px;top:784.26px;font-size:18px;line-height:23px;color:#1a1a1a;font-weight:700;font-style:normal;letter-spacing:0px;">Module</div>
<div class="t " style="left:853px;top:784.26px;font-size:18px;line-height:23px;color:#1a1a1a;font-weight:700;font-style:normal;letter-spacing:-0.55px;">Element</div>
<div class="t " style="left:1078.5px;top:784.26px;font-size:18px;line-height:23px;color:#1a1a1a;font-weight:700;font-style:normal;letter-spacing:-0.7px;">Message</div>
<div class="t " style="left:1747.5px;top:784.26px;font-size:18px;line-height:23px;color:#1a1a1a;font-weight:700;font-style:normal;letter-spacing:-0.45px;">Validator</div>
<svg class="r" style="left:447px;top:825px" width="21" height="18" viewBox="0 0 21 18"><path d="M10.5 1.2 Q11.3 1.2 11.8 2 L19.8 15.5 Q20.4 16.8 19 16.8 H2 Q0.6 16.8 1.2 15.5 L9.2 2 Q9.7 1.2 10.5 1.2 Z" fill="#e6e21a"/><rect x="9.7" y="5.5" width="1.6" height="6" fill="#333"/><rect x="9.7" y="13" width="1.6" height="1.7" fill="#333"/></svg>
<div class="r" style="left:494px;top:822px;width:167px;height:26px;overflow:hidden">
<div class="t " style="left:0px;top:3.26px;font-size:18px;line-height:23px;color:#1175d2;font-weight:400;font-style:normal;">ContainerType_MinimumChildren</div>
</div>
<div class="t " style="left:674px;top:825.26px;font-size:18px;line-height:23px;color:#111;font-weight:400;font-style:normal;letter-spacing:-0.9px;">BswIf</div>
<div class="t " style="left:854px;top:825.26px;font-size:18px;line-height:23px;color:#111;font-weight:400;font-style:normal;letter-spacing:0px;">ApiMappings</div>
<div class="t " style="left:1079px;top:825.26px;font-size:18px;line-height:23px;color:#111;font-weight:400;font-style:normal;">Container 'ApiMappings': No child containers added.</div>
<svg class="r" style="left:447px;top:862px" width="21" height="18" viewBox="0 0 21 18"><path d="M10.5 1.2 Q11.3 1.2 11.8 2 L19.8 15.5 Q20.4 16.8 19 16.8 H2 Q0.6 16.8 1.2 15.5 L9.2 2 Q9.7 1.2 10.5 1.2 Z" fill="#e6e21a"/><rect x="9.7" y="5.5" width="1.6" height="6" fill="#333"/><rect x="9.7" y="13" width="1.6" height="1.7" fill="#333"/></svg>
<div class="r" style="left:494px;top:859px;width:167px;height:26px;overflow:hidden">
<div class="t " style="left:0px;top:3.26px;font-size:18px;line-height:23px;color:#1175d2;font-weight:400;font-style:normal;">ContainerType_MinimumChildren</div>
</div>
<div class="t " style="left:674px;top:862.26px;font-size:18px;line-height:23px;color:#111;font-weight:400;font-style:normal;letter-spacing:-0.9px;">BswIf</div>
<div class="t " style="left:854px;top:862.26px;font-size:18px;line-height:23px;color:#111;font-weight:400;font-style:normal;letter-spacing:-0.25px;">ApiSignatures</div>
<div class="t " style="left:1079px;top:862.26px;font-size:18px;line-height:23px;color:#111;font-weight:400;font-style:normal;">Container 'ApiSignatures': No child containers added.</div>
<svg class="r" style="left:447px;top:900px" width="21" height="18" viewBox="0 0 21 18"><path d="M10.5 1.2 Q11.3 1.2 11.8 2 L19.8 15.5 Q20.4 16.8 19 16.8 H2 Q0.6 16.8 1.2 15.5 L9.2 2 Q9.7 1.2 10.5 1.2 Z" fill="#e6e21a"/><rect x="9.7" y="5.5" width="1.6" height="6" fill="#333"/><rect x="9.7" y="13" width="1.6" height="1.7" fill="#333"/></svg>
<div class="r" style="left:494px;top:897px;width:167px;height:26px;overflow:hidden">
<div class="t " style="left:0px;top:3.26px;font-size:18px;line-height:23px;color:#1175d2;font-weight:400;font-style:normal;">ContainerType_MinimumChildren</div>
</div>
<div class="t " style="left:674px;top:900.26px;font-size:18px;line-height:23px;color:#111;font-weight:400;font-style:normal;letter-spacing:-0.9px;">BswIf</div>
<div class="t " style="left:854px;top:900.26px;font-size:18px;line-height:23px;color:#111;font-weight:400;font-style:normal;letter-spacing:-0.6px;">DataTypes</div>
<div class="t " style="left:1079px;top:900.26px;font-size:18px;line-height:23px;color:#111;font-weight:400;font-style:normal;">Container 'DataTypes': No child containers added.</div>
<div class="r" style="left:433px;top:853px;width:1482px;height:2px;background:#e6e6e6"></div>
<div class="r" style="left:433px;top:890px;width:1482px;height:2px;background:#e6e6e6"></div>
<div class="r" style="left:433px;top:927px;width:1482px;height:2px;background:#e6e6e6"></div>
<div class="r" style="left:433px;top:846px;width:48px;height:1px;background:#e0e0e0"></div>
<div class="r" style="left:433px;top:883px;width:48px;height:1px;background:#e0e0e0"></div>
<div class="r" style="left:433px;top:921px;width:48px;height:1px;background:#e0e0e0"></div>
<div class="r" style="left:530px;top:939px;width:85px;height:32px;box-sizing:border-box;border:1px solid #a4a4a4;background:linear-gradient(#f0f0f0,#e4e4e4)"></div>
<div class="r" style="left:432px;top:938px;width:99px;height:36px;box-sizing:border-box;border:1px solid #a4a4a4;border-top-color:#d0d0d0;background:#fff"></div>
<div class="t " style="left:443px;top:945.06px;font-size:18px;line-height:23px;color:#111;font-weight:400;font-style:normal;">Violations</div>
<div class="t " style="left:540px;top:945.06px;font-size:18px;line-height:23px;color:#111;font-weight:400;font-style:normal;">Console</div>
<div class="r" style="left:0px;top:974px;width:1920px;height:34px;background:#eef5fd"></div>
<div class="r" style="left:0px;top:974px;width:1920px;height:1px;background:#d3e2f3"></div>
<div class="t " style="left:5.5px;top:981.86px;font-size:18px;line-height:23px;color:#1a1a1a;font-weight:400;font-style:normal;letter-spacing:-1.1px;">Ready</div>
<div class="r" style="left:61px;top:978px;width:1px;height:26px;background:#3a3a3a"></div>
<svg class="r" style="left:69px;top:983px" width="21" height="16" viewBox="0 0 21 16"><path d="M1 1.8 Q1 0.5 2.3 0.5 H7.5 L9 2 H19.5 Q20.5 2 20.5 3 V5 H1 Z" fill="#6d8aa6"/>
<rect x="0.5" y="2.5" width="20" height="13" rx="1" fill="#8ea7c0"/>
<rect x="5" y="6" width="6.5" height="1.4" fill="#fff"/><rect x="13" y="5.6" width="2.8" height="2.6" fill="#fff"/>
<rect x="5" y="9" width="10.5" height="1.3" fill="#fff"/><rect x="5" y="11.6" width="10.5" height="1.3" fill="#fff"/></svg>
<div class="t " style="left:98.4px;top:981.86px;font-size:18px;line-height:23px;color:#1a1a1a;font-weight:400;font-style:normal;letter-spacing:-0.8px;">Diagnostic_ECU</div>
<div class="r" style="left:230px;top:978px;width:1px;height:26px;background:#3a3a3a"></div>
<svg class="r" style="left:241px;top:984px" width="17" height="15" viewBox="0 0 17 15"><rect x="0.0" y="0.0" width="4.6" height="4.3" fill="#1e9be8"/><rect x="5.8" y="0.0" width="4.6" height="4.3" fill="#1e9be8"/><rect x="11.6" y="0.0" width="4.6" height="4.3" fill="#1e9be8"/><rect x="0.0" y="5.3" width="4.6" height="4.3" fill="#1e9be8"/><rect x="5.8" y="5.3" width="4.6" height="4.3" fill="#1e9be8"/><rect x="11.6" y="5.3" width="4.6" height="4.3" fill="#1e9be8"/><rect x="0.0" y="10.6" width="4.6" height="4.3" fill="#1e9be8"/><rect x="5.8" y="10.6" width="4.6" height="4.3" fill="#1e9be8"/><rect x="11.6" y="10.6" width="4.6" height="4.3" fill="#1e9be8"/></svg>
<div class="t " style="left:267px;top:981.86px;font-size:18px;line-height:23px;color:#1a1a1a;font-weight:400;font-style:normal;">7 <span style="color:#6a6a6a">Modules</span></div>
<div class="r" style="left:358px;top:978px;width:1px;height:26px;background:#3a3a3a"></div>
<svg class="r" style="left:367px;top:982px" width="20" height="19" viewBox="0 0 20 19"><path d="M10 1 Q10.8 1 11.4 1.6 L18.4 8.6 Q19 9.2 19 9.5 Q19 9.8 18.4 10.4 L11.4 17.4 Q10.8 18 10 18 Q9.2 18 8.6 17.4 L1.6 10.4 Q1 9.8 1 9.5 Q1 9.2 1.6 8.6 L8.6 1.6 Q9.2 1 10 1 Z" fill="#d43a3a"/><rect x="9.2" y="4.8" width="1.6" height="6.5" fill="#fff"/><rect x="9.2" y="12.6" width="1.6" height="1.7" fill="#fff"/></svg>
<div class="t " style="left:394px;top:981.86px;font-size:18px;line-height:23px;color:#e01c3c;font-weight:400;font-style:normal;">0</div>
<svg class="r" style="left:413px;top:983px" width="19" height="17" viewBox="0 0 19 17"><path d="M9.5 1 Q10.3 1 10.8 1.8 L18.2 14.5 Q18.8 15.8 17.4 15.8 H1.6 Q0.2 15.8 0.8 14.5 L8.2 1.8 Q8.7 1 9.5 1 Z" fill="#e6e21a"/><rect x="8.7" y="5" width="1.6" height="5.8" fill="#333"/><rect x="8.7" y="12" width="1.6" height="1.7" fill="#333"/></svg>
<div class="t " style="left:439.5px;top:981.86px;font-size:18px;line-height:23px;color:#ff8a0a;font-weight:400;font-style:normal;">0</div>
<div class="r" style="left:458px;top:986px;width:12px;height:12px;background:#22c35a;border-radius:50%"></div>
<div class="t " style="left:478px;top:981.86px;font-size:18px;line-height:23px;color:#1d6b40;font-weight:400;font-style:normal;">Online</div>
<div class="t " style="left:1868.3px;top:981.86px;font-size:18px;line-height:23px;color:#6a6a6a;font-weight:400;font-style:normal;letter-spacing:-0.9px;">Ready</div>
<div class="r" style="left:645px;top:396px;width:630px;height:217px;background:#f3f3f3"></div>
<div class="r" style="left:645px;top:396px;width:630px;height:217px;box-sizing:border-box;border:1px solid #cdcdcd;border-radius:8px;background:#f4f4f4;overflow:hidden">
<div class="r" style="left:0px;top:0px;width:628px;height:46px;background:#0078d4"></div>
<div class="r" style="left:0px;top:46px;width:628px;height:91px;background:#fff"></div>
</div>
<div class="t " style="left:668px;top:407.88px;font-size:22px;line-height:29px;color:#fff;font-weight:700;font-style:normal;transform:scaleX(0.915);transform-origin:0 0;">Generation Complete</div>
<svg class="r" style="left:676px;top:467px" width="43" height="43" viewBox="0 0 43 43"><circle cx="21.5" cy="21.4" r="21" fill="#0478d4"/><ellipse cx="20.8" cy="12.9" rx="2.9" ry="2.1" fill="#fff"/><path d="M17.3 18.1 H22.5 L20 29 H23 L22.2 32 H17.8 Q15.2 31.8 15.5 28.8 Z" fill="#fff"/></svg>
<div class="t " style="left:740px;top:477.67px;font-size:20px;line-height:26px;color:#1a1a1a;font-weight:400;font-style:normal;letter-spacing:-0.46px;">Successfully generated 2 file(s) for 'Can'.</div>
<div class="r" style="left:1130px;top:551px;width:120px;height:42px;background:#0078d4;border-radius:4px"></div>
<div class="t " style="left:1178px;top:563.06px;font-size:18px;line-height:23px;color:#fff;font-weight:400;font-style:normal;">OK</div>
</body></html>
